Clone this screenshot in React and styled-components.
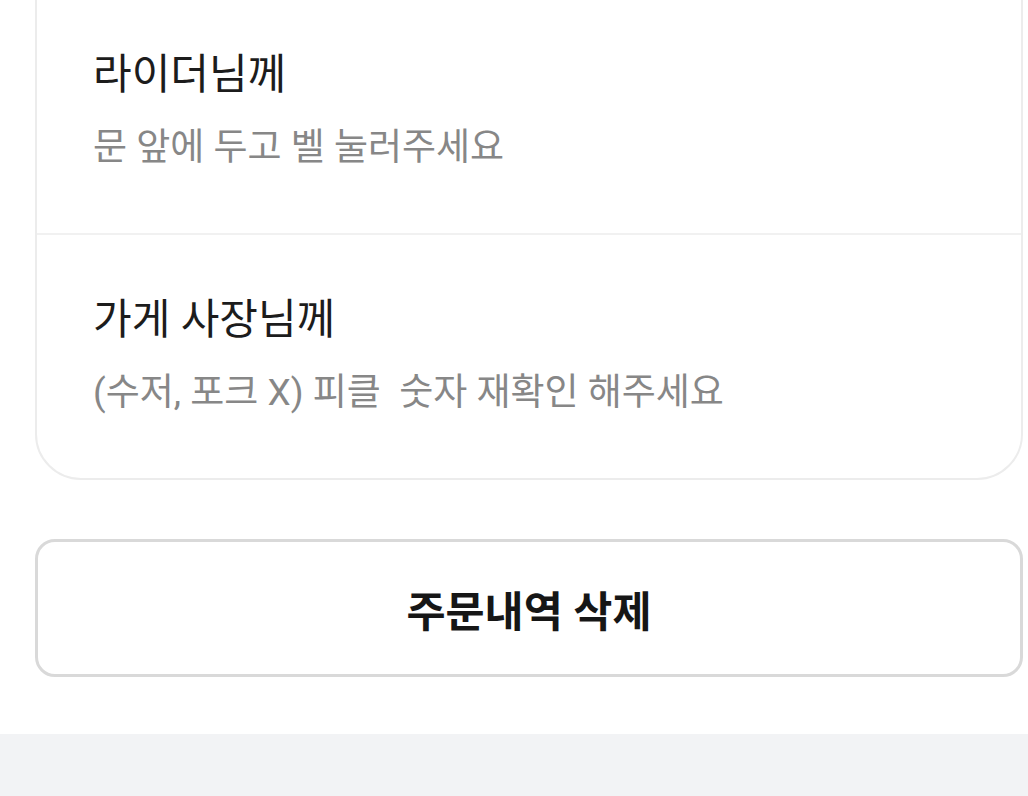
import React from "react";
import styled, { createGlobalStyle } from "styled-components";

const GlobalStyle = createGlobalStyle`
  html, body {
    margin: 0;
    padding: 0;
    background: #ffffff;
    font-family: Roboto, "Noto Sans CJK KR", sans-serif;
    overflow: hidden;
  }
`;

const Page = styled.div`
  display: flex;
  flex-direction: column;
  min-height: 796px;
`;

const Content = styled.div`
  display: flex;
  flex-direction: column;
  padding: 0 5px 57px 35px;
  margin-top: -60px;
`;

const Card = styled.section`
  display: flex;
  flex-direction: column;
  border: 2px solid #ececec;
  border-radius: 46px;
  background: #fff;
`;

const MessageBlock = styled.div`
  display: flex;
  flex-direction: column;
  gap: 20px;
  padding: 57px 56px 60px;
  &:first-child {
    padding-top: 105px;
  }
  & + & {
    border-top: 2px solid #f1f1f1;
  }
`;

const Title = styled.h3`
  margin: 0;
  font-size: 42px;
  line-height: 56px;
  font-weight: 400;
  color: #1c1c1c;
`;

const Body = styled.p`
  margin: 0;
  font-size: 37px;
  line-height: 50px;
  font-weight: 400;
  color: #878787;
  white-space: pre;
`;

const DeleteButton = styled.button`
  margin-top: 59px;
  height: 138px;
  border: 3px solid #d9d9d9;
  border-radius: 20px;
  background: #fff;
  font-family: Roboto, "Noto Sans CJK KR", sans-serif;
  font-size: 42.5px;
  font-weight: 700;
  color: #161616;
  cursor: pointer;
`;

const Footer = styled.div`
  flex: 1;
  background: #f2f3f5;
`;

const messages = [
  { to: "라이더님께", text: "문 앞에 두고 벨 눌러주세요" },
  { to: "가게 사장님께", text: "(수저, 포크 X) 피클  숫자 재확인 해주세요" },
];

export default function App() {
  return (
    <Page>
      <GlobalStyle />
      <Content>
        <Card>
          {messages.map((m) => (
            <MessageBlock key={m.to}>
              <Title>{m.to}</Title>
              <Body>{m.text}</Body>
            </MessageBlock>
          ))}
        </Card>
        <DeleteButton type="button">주문내역 삭제</DeleteButton>
      </Content>
      <Footer />
    </Page>
  );
}
